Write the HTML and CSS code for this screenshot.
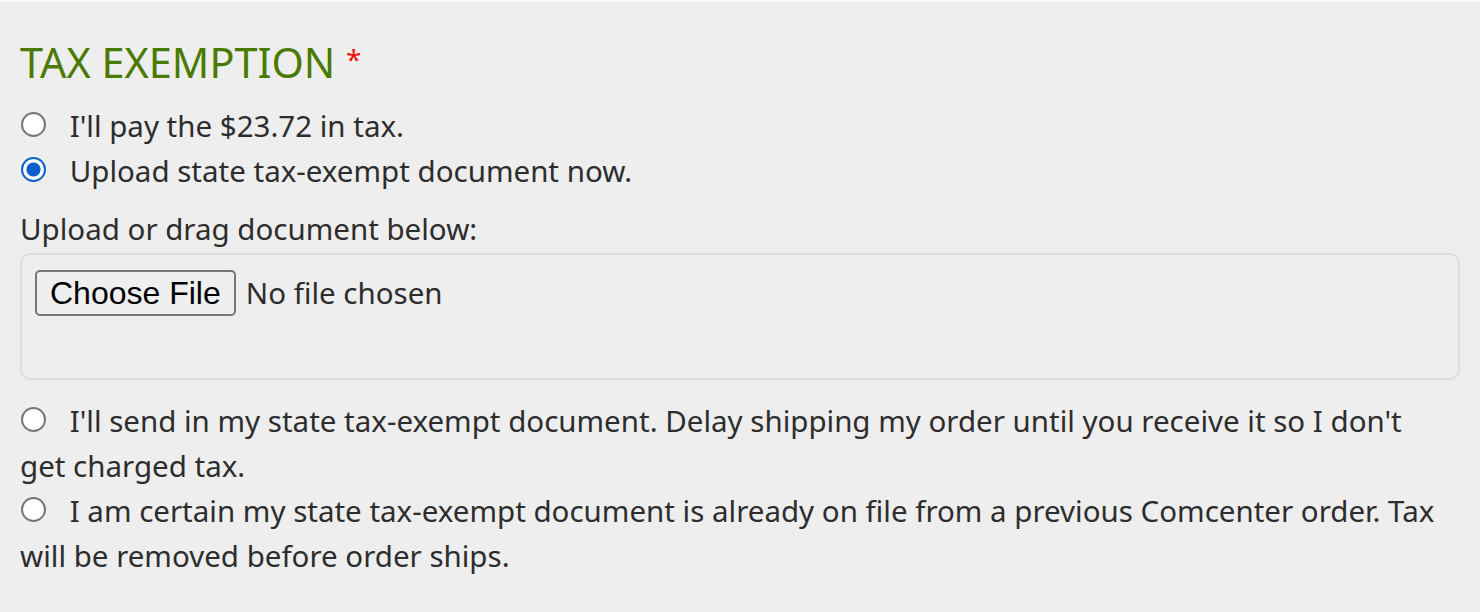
FILE: index.html
```html
<!DOCTYPE html>
<html lang="en">
<head>
    <meta charset="UTF-8">
    <meta name="viewport" content="width=device-width, initial-scale=1.0">
    <title>Tax Exemption | Comcenter Checkout</title>
    <link rel="stylesheet" href="styles.css">
</head>
<body>
    <div class="tax-section">
        <h2 class="section-title">TAX EXEMPTION <span class="required">*</span></h2>

        <div class="options">
            <label class="option">
                <input type="radio" name="taxExempt" value="pay">
                I'll pay the $23.72 in tax.
            </label>
            <label class="option">
                <input type="radio" name="taxExempt" value="upload" checked>
                Upload state tax-exempt document now.
            </label>
        </div>

        <div class="upload-group">
            <div class="upload-label">Upload or drag document below:</div>
            <div class="dropzone">
                <input type="file" id="taxDocument" name="taxDocument">
            </div>
        </div>

        <div class="options">
            <label class="option">
                <input type="radio" name="taxExempt" value="send">
                I'll send in my state tax-exempt document. Delay shipping my order until you receive it so I don't get charged tax.
            </label>
            <label class="option">
                <input type="radio" name="taxExempt" value="onfile">
                I am certain my state tax-exempt document is already on file from a previous Comcenter order. Tax will be removed before order ships.
            </label>
        </div>
    </div>
</body>
</html>
```

FILE: styles.css
```css
:root {
    --green: #4a7a00;
    --text-color: #2d2d2d;
    --bg-color: #eeeeee;
    --border-color: #dddddd;
    --radio-blue: #0b5fcc;
}

* {
    box-sizing: border-box;
    margin: 0;
    padding: 0;
}

body {
    background-color: var(--bg-color);
    border-top: 2px solid #f8f8f8;
    font-family: "Noto Sans", "Open Sans", sans-serif;
    font-size: 29.5px;
    color: var(--text-color);
    padding: 0 20px;
}

.tax-section {
    padding-top: 35px;
}

.section-title {
    color: var(--green);
    font-size: 41.4px;
    font-weight: normal;
    line-height: 50px;
    margin-bottom: 16px;
}

.required {
    color: #ee1111;
    font-size: 28px;
    line-height: 1;
    vertical-align: 8px;
}

.option {
    display: block;
    line-height: 45px;
    padding-right: 12px;
}

input[type="radio"] {
    appearance: none;
    width: 25px;
    height: 25px;
    border: 2px solid #767676;
    border-radius: 50%;
    background: #fff;
    margin: 0 16px 0 1px;
}

input[type="radio"]:checked {
    border-color: var(--radio-blue);
    background: radial-gradient(circle, var(--radio-blue) 0 6.5px, #fff 7.5px);
}

.upload-group {
    margin: 13px 0 18px;
}

.upload-label {
    line-height: 45px;
}

.dropzone {
    border: 2px solid var(--border-color);
    border-radius: 10px;
    height: 127px;
    padding: 15px 13px;
    margin-top: 2px;
}

input[type="file"] {
    font-family: inherit;
    font-size: 29.5px;
    color: var(--text-color);
}

input[type="file"]::file-selector-button {
    font-family: "Liberation Sans", Arial, sans-serif;
    font-size: 32px;
    color: #000;
    background: #efefef;
    border: 2px solid #767676;
    border-radius: 5px;
    padding: 3px 13px 2px;
    margin-right: 10px;
}
```
